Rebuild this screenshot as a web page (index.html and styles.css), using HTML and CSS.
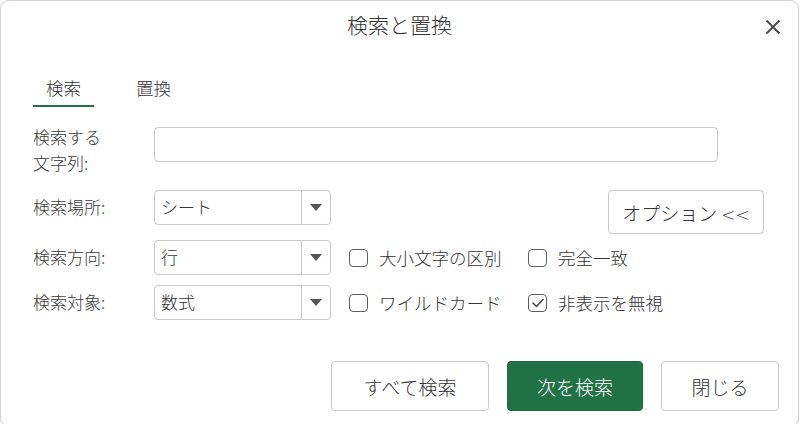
FILE: index.html
```html
<!DOCTYPE html>
<html lang="ja">
<head>
<meta charset="utf-8">
<title>検索と置換</title>
<link rel="stylesheet" href="styles.css">
</head>
<body>
<div class="dialog">
  <header class="head">
    <span></span>
    <h1 class="title">検索と置換</h1>
    <button class="close" aria-label="閉じる">
      <svg width="16" height="16" viewBox="0 0 16 16"><path d="M1.5 1.5 L14.5 14.5 M14.5 1.5 L1.5 14.5" stroke="#4a4a4a" stroke-width="2" fill="none"/></svg>
    </button>
  </header>

  <nav class="tabs">
    <span class="tab active">検索</span>
    <span class="tab">置換</span>
  </nav>

  <div class="form">
    <div class="row row-find">
      <label class="lbl lbl-multi">検索する<br>文字列:</label>
      <div class="input"></div>
    </div>

    <div class="row row-where">
      <label class="lbl">検索場所:</label>
      <div class="select"><span class="val">シート</span><span class="arrow"></span></div>
      <button class="btn opt">オプション <span class="chev">&lt;&lt;</span></button>
    </div>

    <div class="row row-dir">
      <label class="lbl">検索方向:</label>
      <div class="select"><span class="val">行</span><span class="arrow"></span></div>
      <div class="checks">
        <span class="check"><span class="box"></span>大小文字の区別</span>
        <span class="check"><span class="box"></span>完全一致</span>
      </div>
    </div>

    <div class="row row-target">
      <label class="lbl">検索対象:</label>
      <div class="select"><span class="val">数式</span><span class="arrow"></span></div>
      <div class="checks">
        <span class="check"><span class="box"></span>ワイルドカード</span>
        <span class="check"><span class="box"><svg width="14" height="12" viewBox="0 0 14 12"><path d="M2 6 L5.5 9.5 L12 2.5" stroke="#4a4a4a" stroke-width="1.6" fill="none" stroke-linecap="round" stroke-linejoin="round"/></svg></span>非表示を無視</span>
      </div>
    </div>
  </div>

  <footer class="foot">
    <button class="btn action w-all">すべて検索</button>
    <button class="btn action w-next primary">次を検索</button>
    <button class="btn action w-close">閉じる</button>
  </footer>
</div>
</body>
</html>
```

FILE: styles.css
```css
* { box-sizing: border-box; }

html, body {
  margin: 0;
  padding: 0;
  background: #ffffff;
  overflow: hidden;
}

body {
  font-family: "Noto Sans CJK JP", "Noto Sans", sans-serif;
  font-weight: 300;
  color: #333333;
}

.dialog {
  width: 799px;
  height: 427px;
  border: 1px solid #d4d4d4;
  border-radius: 9px;
  background: #ffffff;
  box-shadow: 0 0 2px rgba(0,0,0,0.12);
  display: flex;
  flex-direction: column;
}

.head {
  height: 51px;
  display: grid;
  grid-template-columns: 1fr auto 1fr;
  align-items: center;
}

.title {
  margin: -4px 0 0;
  font-size: 21px;
  font-weight: 300;
  line-height: 51px;
  color: #333;
}

.close {
  justify-self: end;
  margin-right: 17px;
  margin-top: 1px;
  width: 16px;
  height: 16px;
  padding: 0;
  border: none;
  background: none;
  display: flex;
}

.tabs {
  margin-top: 24px;
  margin-left: 32px;
  display: flex;
  gap: 29px;
}

.tab {
  font-size: 17.5px;
  line-height: 24px;
  padding: 0 13px 5px;
  border-bottom: 2px solid transparent;
  color: #333;
}

.tab.active {
  border-bottom-color: #217346;
}

.form {
  padding: 0 34px 0 32px;
}

.row {
  display: flex;
  align-items: flex-start;
}

.row-find { margin-top: 17px; }
.row-where { margin-top: 14px; }
.row-dir { margin-top: 6px; }
.row-target { margin-top: 10px; }

.lbl {
  width: 121px;
  flex: none;
  font-size: 17px;
  line-height: 33px;
  padding-bottom: 2px;
  color: #3a3a3a;
}

.lbl-multi {
  line-height: 26px;
  padding-bottom: 0;
}

.input {
  margin-top: 3px;
  width: 564px;
  height: 35px;
  border: 1px solid #c8c8c8;
  border-radius: 4px;
}

.select {
  width: 177px;
  height: 35px;
  border: 1px solid #c8c8c8;
  border-radius: 4px;
  display: flex;
  flex: none;
}

.select .val {
  flex: 1;
  padding-left: 6px;
  font-size: 17px;
  line-height: 31px;
  color: #333;
  border-right: 1px solid #c8c8c8;
}

.select .arrow {
  width: 28px;
  display: flex;
  align-items: center;
  justify-content: center;
}

.select .arrow::before {
  content: "";
  width: 0;
  height: 0;
  border-left: 6px solid transparent;
  border-right: 6px solid transparent;
  border-top: 7px solid #555;
}

.btn {
  font-family: inherit;
  font-weight: 300;
  background: #ffffff;
  border: 1px solid #c8c8c8;
  border-radius: 4px;
  color: #333;
  padding: 0;
}

.opt {
  margin-left: auto;
  width: 156px;
  height: 44px;
  font-size: 19px;
}

.chev {
  font-family: "DejaVu Sans", sans-serif;
  font-weight: 200;
  font-size: 17px;
  letter-spacing: 0;
}

.checks {
  margin-left: 18px;
  display: grid;
  grid-template-columns: 179px auto;
  align-self: center;
}

.check {
  display: flex;
  align-items: center;
  font-size: 17.5px;
  line-height: 24px;
  color: #333;
}

.box {
  width: 19px;
  height: 18px;
  border: 1.5px solid #5e5e5e;
  border-radius: 4px;
  margin-right: 11px;
  display: flex;
  align-items: center;
  justify-content: center;
}

.foot {
  margin-top: 41px;
  padding-right: 19px;
  display: flex;
  justify-content: flex-end;
  gap: 18px;
}

.action {
  height: 50px;
  font-size: 19px;
}

.w-all { width: 158px; }
.w-next { width: 136px; }
.w-close { width: 118px; }

.primary {
  background: #217346;
  border-color: #1c6a3f;
  color: #ffffff;
}
```
